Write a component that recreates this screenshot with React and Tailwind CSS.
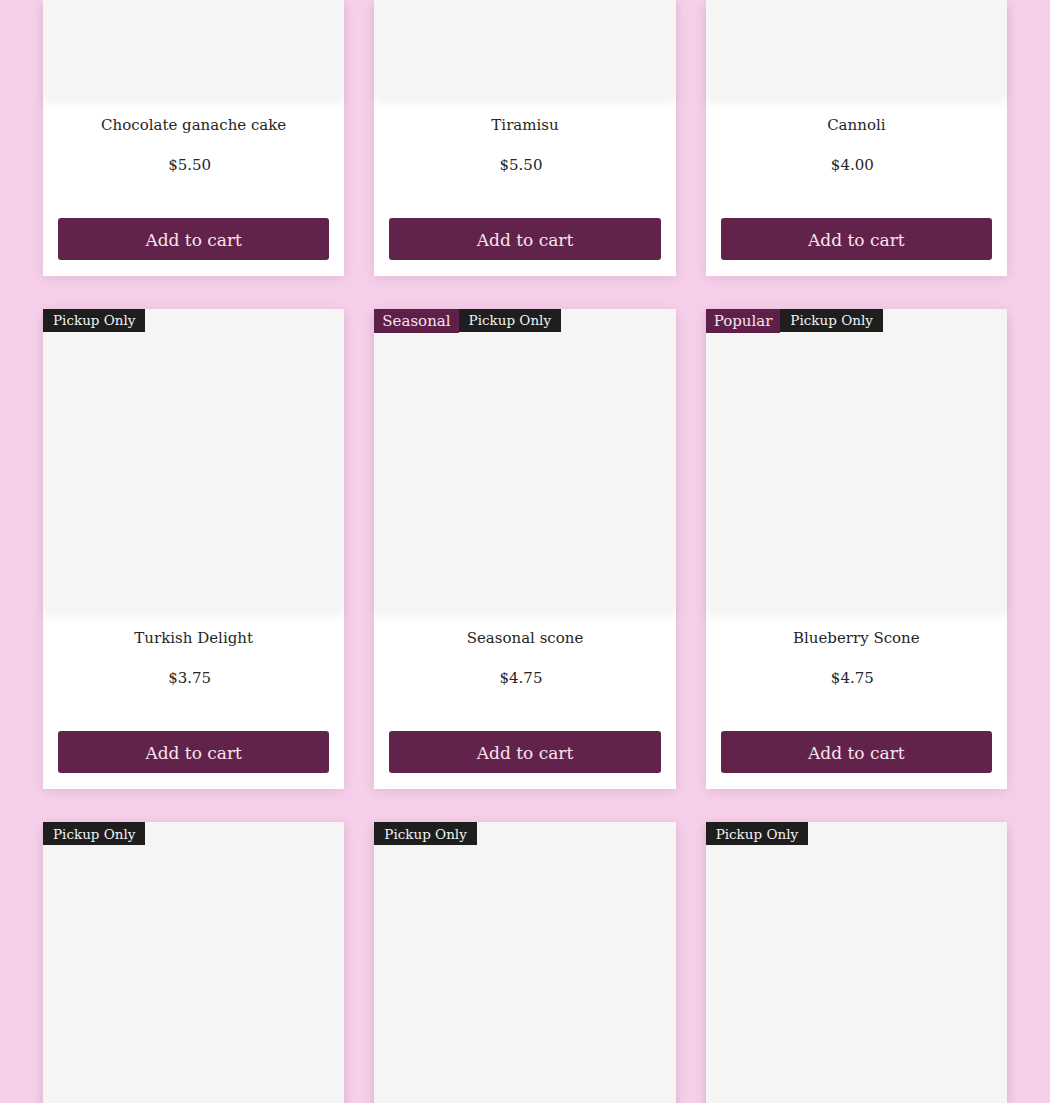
const products = [
  { name: "Chocolate ganache cake", price: "$5.50", cut: true, badges: [] },
  { name: "Tiramisu", price: "$5.50", cut: true, badges: [] },
  { name: "Cannoli", price: "$4.00", cut: true, badges: [] },
  { name: "Turkish Delight", price: "$3.75", badges: ["Pickup Only"] },
  { name: "Seasonal scone", price: "$4.75", badges: ["Seasonal", "Pickup Only"] },
  { name: "Blueberry Scone", price: "$4.75", badges: ["Popular", "Pickup Only"] },
  // the last row runs past the bottom of the window, only the image shows
  { name: "row3-a", imageOnly: true, badges: ["Pickup Only"] },
  { name: "row3-b", imageOnly: true, badges: ["Pickup Only"] },
  { name: "row3-c", imageOnly: true, badges: ["Pickup Only"] },
];

function Badge({ label }) {
  if (label === "Pickup Only") {
    return (
      <span className="flex h-[23px] items-center bg-[#1e1e1e] px-[10px] text-[13.5px] text-[#f3f3f3]">
        {label}
      </span>
    );
  }
  return (
    <span className="flex h-[24px] items-center bg-[#5e2048] px-[8px] text-[15px] text-[#f7e3f0]">
      {label}
    </span>
  );
}

function ProductCard({ product }) {
  return (
    <div className="flex flex-col bg-white shadow-[0_2px_12px_rgba(150,70,120,0.18)]">
      <div
        className={`relative w-full bg-[#f5f5f5] shadow-[0_6px_10px_rgba(0,0,0,0.05)] ${
          product.cut ? "h-[97px]" : "aspect-square"
        }`}
      >
        {product.badges.length ? (
          <div className="absolute left-0 top-0 flex">
            {product.badges.map((b) => (
              <Badge key={b} label={b} />
            ))}
          </div>
        ) : null}
      </div>
      {product.imageOnly ? null : (
        <div className="flex flex-col items-center px-[15px] pb-[16px] pt-[18px]">
          <h2 className="text-[15px] leading-[20px] text-[#262626]">{product.name}</h2>
          <p className="mr-[8px] mt-[20px] text-[15px] leading-[20px] text-[#262626]">
            {product.price}
          </p>
          <button
            type="button"
            className="mt-[43px] h-[42px] w-full rounded-[3px] bg-[#62234a] pt-[3px] text-[17px] text-[#fbe3f2]"
          >
            Add to cart
          </button>
        </div>
      )}
    </div>
  );
}

export default function App() {
  return (
    <div
      className="min-h-screen bg-[#f6d0ea] px-[43px]"
      style={{ fontFamily: '"DejaVu Serif", serif' }}
    >
      <div className="grid grid-cols-3 gap-x-[30px] gap-y-[33px]">
        {products.map((p) => (
          <ProductCard key={p.name} product={p} />
        ))}
      </div>
    </div>
  );
}
